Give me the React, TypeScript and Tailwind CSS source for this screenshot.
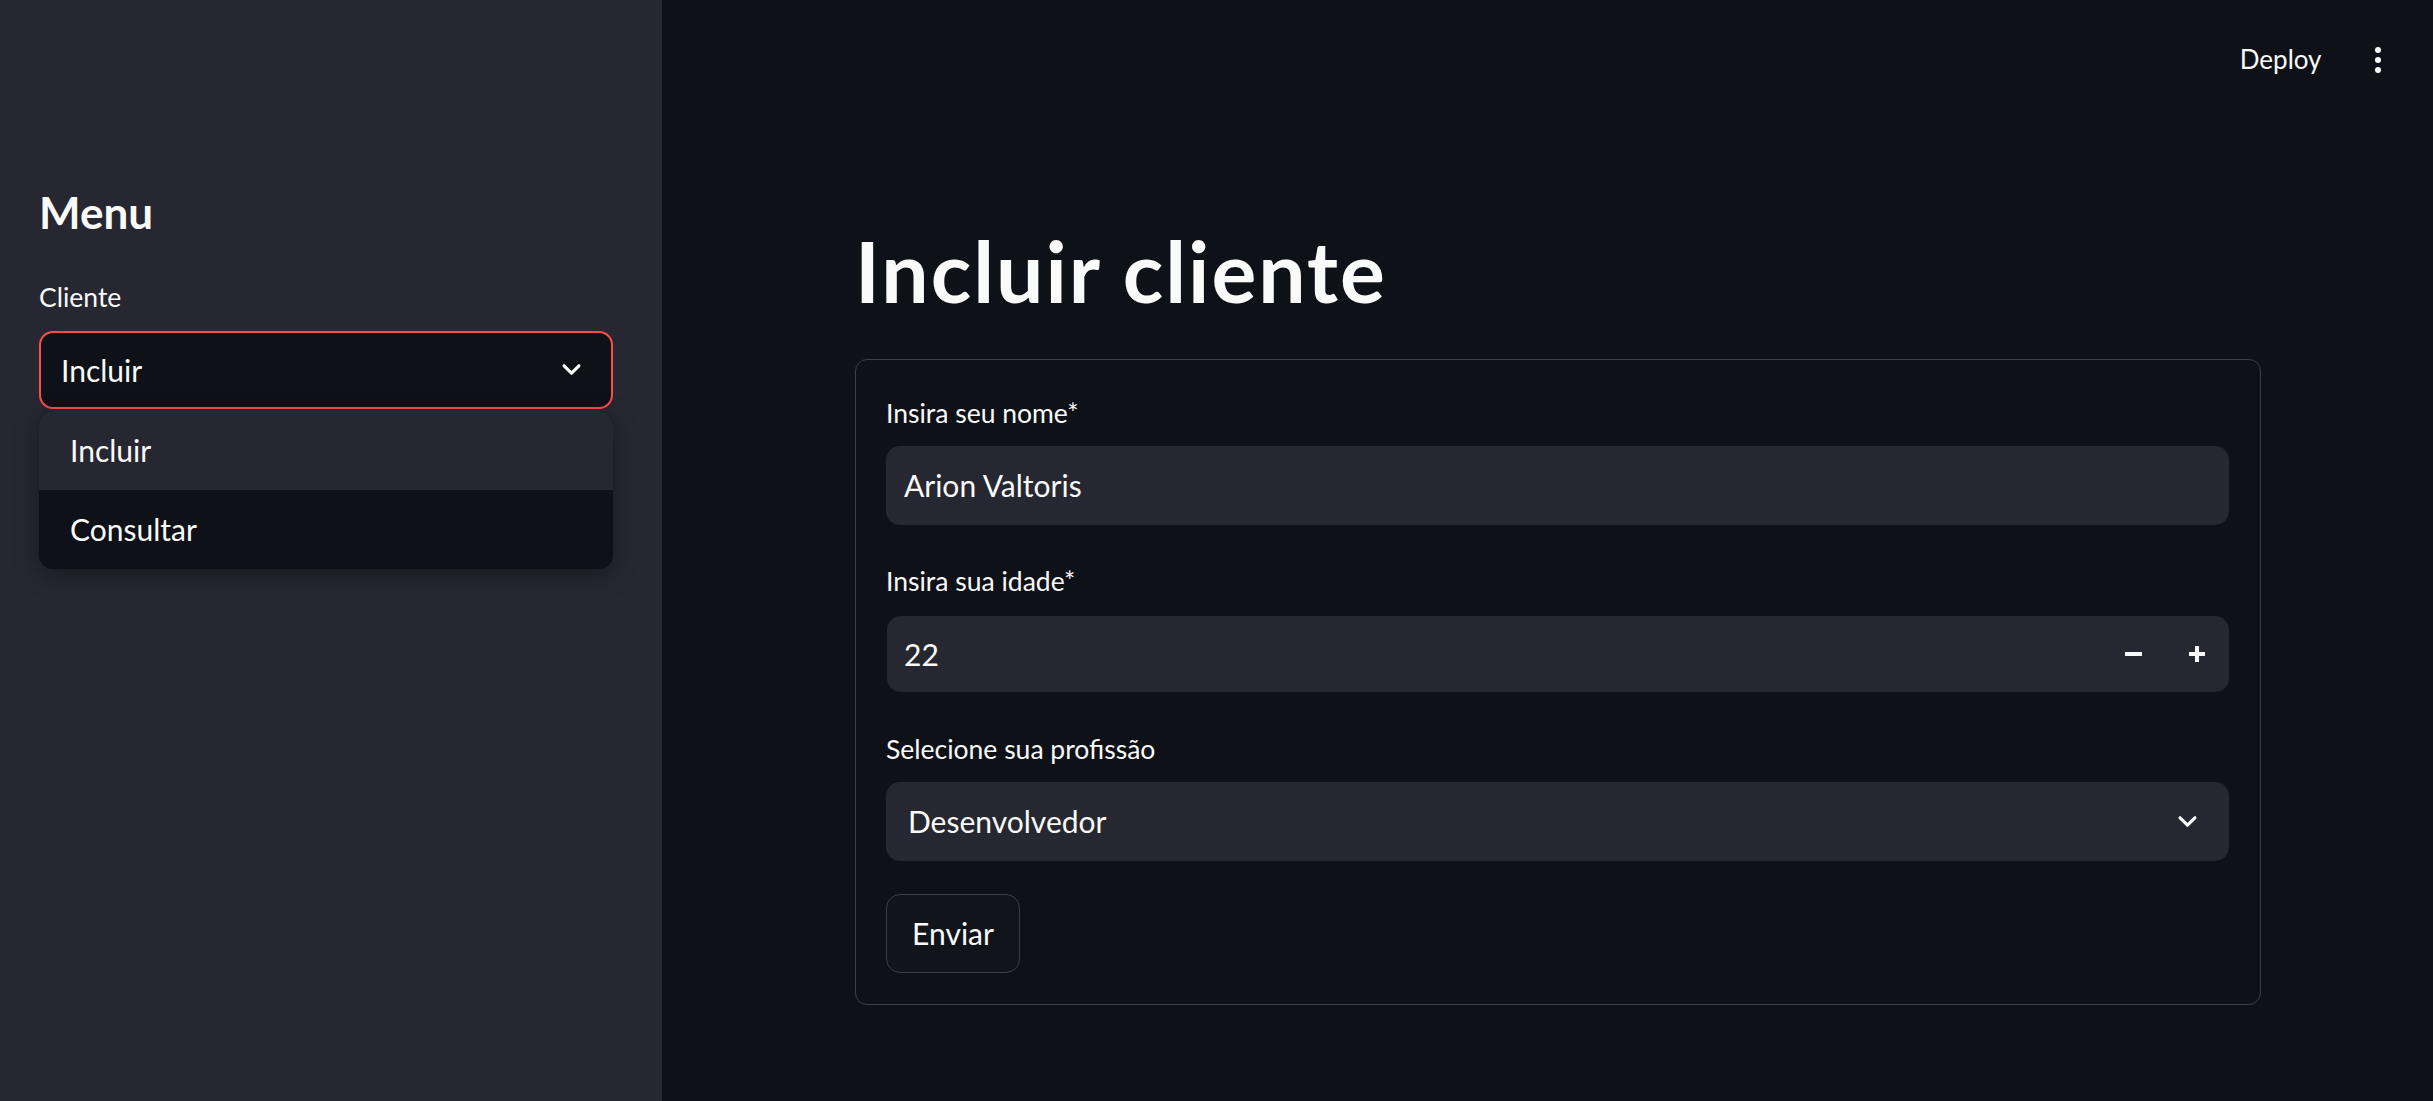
import { useState } from "react";

const Chevron = ({ className = "" }: { className?: string }) => (
  <svg
    viewBox="0 0 22 14"
    className={className}
    fill="none"
    stroke="#fafafa"
    strokeWidth={3.4}
    strokeLinecap="round"
    strokeLinejoin="round"
  >
    <path d="M3 3 L11 11 L19 3" />
  </svg>
);

const Label = ({ children }: { children: React.ReactNode }) => (
  <div className="text-[26.5px] leading-[26px] text-[#fafafa]">{children}</div>
);

const Sidebar = () => {
  const [open] = useState(true);
  return (
    <aside className="w-[662px] shrink-0 bg-[#262730] pl-[39px] pt-[186px]">
      <h2 className="text-[44px] font-bold leading-[1.2] text-[#fafafa]">Menu</h2>
      <div className="mt-[45px]">
        <Label>Cliente</Label>
      </div>
      <div className="relative mt-[21px] w-[574px]">
        <div className="flex h-[78px] items-center justify-between rounded-[14px] border-2 border-[#ff4b4b] bg-[#0e1117] pl-[20px] pr-[29px]">
          <span className="text-[30px] leading-[1.2] text-[#fafafa]">Incluir</span>
          <Chevron className="h-[13px] w-[21px]" />
        </div>
        {open && (
          <ul className="absolute left-0 right-0 top-[80px] overflow-hidden rounded-[14px] bg-[#0e1117] shadow-[0_6px_24px_rgba(0,0,0,0.35)]">
            <li className="flex h-[79px] items-center bg-[#262730] pl-[31px] text-[30px] leading-[1.2] text-[#fafafa]">
              Incluir
            </li>
            <li className="flex h-[79px] items-center pl-[31px] text-[30px] leading-[1.2] text-[#fafafa]">
              Consultar
            </li>
          </ul>
        )}
      </div>
    </aside>
  );
};

const Header = () => (
  <header className="flex h-[120px] items-center justify-end gap-[53px] pr-[52px]">
    <span className="text-[26px] leading-[1.2] text-[#fafafa]">Deploy</span>
    <div className="flex flex-col items-center gap-[3.5px]">
      <span className="h-[6.5px] w-[6.5px] rounded-full bg-[#fafafa]" />
      <span className="h-[6.5px] w-[6.5px] rounded-full bg-[#fafafa]" />
      <span className="h-[6.5px] w-[6.5px] rounded-full bg-[#fafafa]" />
    </div>
  </header>
);

const ClienteForm = () => (
  <div className="w-[1406px] rounded-[12px] border border-[#3d3f46] pl-[30px] pr-[31px] pb-[31px] pt-[40px]">
    <Label>Insira seu nome*</Label>
    <div className="mt-[20px] flex h-[79px] items-center rounded-[14px] bg-[#262730] pl-[18px]">
      <span className="text-[30px] leading-[1.2] text-[#fafafa]">Arion Valtoris</span>
    </div>

    <div className="mt-[43px]">
      <Label>Insira sua idade*</Label>
    </div>
    <div className="mt-[22px] ml-[1px] flex h-[76px] items-center rounded-[14px] bg-[#262730] pl-[17px]">
      <span className="flex-1 text-[30px] leading-[1.2] text-[#fafafa]">22</span>
      <button className="flex h-full w-[64px] items-center justify-center">
        <span className="h-[4px] w-[17px] bg-[#fafafa]" />
      </button>
      <button className="relative flex h-full w-[64px] items-center justify-center">
        <span className="h-[4px] w-[16px] bg-[#fafafa]" />
        <span className="absolute h-[16px] w-[4px] bg-[#fafafa]" />
      </button>
    </div>

    <div className="mt-[44px]">
      <Label>Selecione sua profissão</Label>
    </div>
    <div className="mt-[20px] flex h-[79px] items-center justify-between rounded-[14px] bg-[#262730] pl-[22px] pr-[31px]">
      <span className="text-[30px] leading-[1.2] text-[#fafafa]">Desenvolvedor</span>
      <Chevron className="h-[13px] w-[21px]" />
    </div>

    <button className="mt-[33px] flex h-[79px] w-[134px] items-center justify-center rounded-[14px] border border-[#3d3f46] bg-[#11141b] text-[30px] leading-[1.2] text-[#fafafa]">
      Enviar
    </button>
  </div>
);

export default function App() {
  return (
    <div className="flex h-[1101px] w-full overflow-hidden bg-[#0e1117] font-[Lato,sans-serif]">
      <Sidebar />
      <main className="flex-1">
        <Header />
        <div className="pl-[193px]">
          <h1 className="mt-[101px] text-[84px] font-bold leading-[1.2] tracking-[2px] text-[#fafafa]">
            Incluir cliente
          </h1>
          <div className="mt-[37px]">
            <ClienteForm />
          </div>
        </div>
      </main>
    </div>
  );
}
